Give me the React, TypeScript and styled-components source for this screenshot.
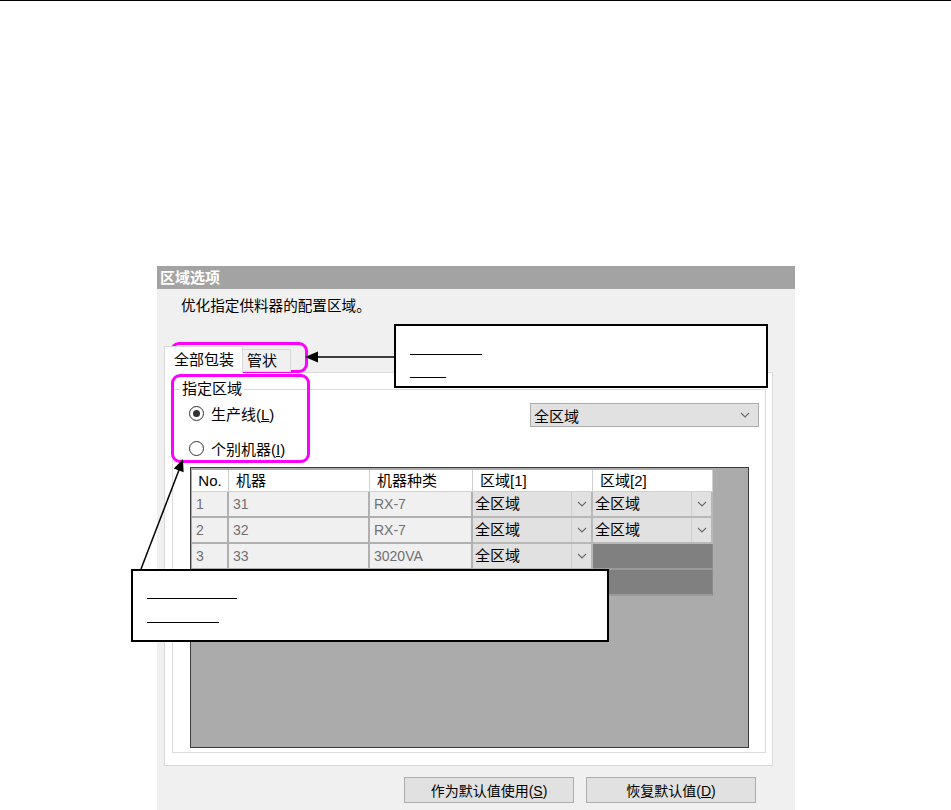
import React from "react";
import styled, { createGlobalStyle } from "styled-components";

const GlobalStyle = createGlobalStyle`
  html, body {
    margin: 0;
    padding: 0;
    background: #fff;
  }
  body {
    font-family: "Liberation Sans", "Noto Sans CJK SC", sans-serif;
    color: #000;
  }
`;

type Row = {
  no: string;
  machine: string;
  kind: string;
  area1: string | null;
  area2: string | null;
};

const rows: Row[] = [
  { no: "1", machine: "31", kind: "RX-7", area1: "全区域", area2: "全区域" },
  { no: "2", machine: "32", kind: "RX-7", area1: "全区域", area2: "全区域" },
  { no: "3", machine: "33", kind: "3020VA", area1: "全区域", area2: null },
  { no: "4", machine: "34", kind: "3020VA", area1: "全区域", area2: null },
];

const Chevron = () => (
  <svg width="10" height="6" viewBox="0 0 10 6">
    <path d="M1 1 L5 5 L9 1" fill="none" stroke="#6a6a6a" strokeWidth="1.1" />
  </svg>
);

const App = () => {
  return (
    <Page>
      <GlobalStyle />
      <TopRule />
      <Dialog>
        <TitleBar>区域选项</TitleBar>
        <Description>优化指定供料器的配置区域。</Description>
        <TabArea>
          <TabBar>
            <Tab $active>全部包装</Tab>
            <Tab>管状</Tab>
          </TabBar>
          <TabPage>
            <GroupBox>
              <Legend>指定区域</Legend>
              <GroupBody>
                <TopRow>
                  <RadioColumn>
                    <RadioItem>
                      <RadioCircle $checked />
                      <span>
                        生产线(<u>L</u>)
                      </span>
                    </RadioItem>
                    <RadioItem>
                      <RadioCircle />
                      <span>
                        个别机器(<u>I</u>)
                      </span>
                    </RadioItem>
                  </RadioColumn>
                  <Combo>
                    <span>全区域</span>
                    <Chevron />
                  </Combo>
                </TopRow>
                <GridFrame>
                  <Table>
                    <HeadCell $center>No.</HeadCell>
                    <HeadCell>机器</HeadCell>
                    <HeadCell>机器种类</HeadCell>
                    <HeadCell>区域[1]</HeadCell>
                    <HeadCell>区域[2]</HeadCell>
                    {rows.map((r) => (
                      <React.Fragment key={r.no}>
                        <DataCell>{r.no}</DataCell>
                        <DataCell>{r.machine}</DataCell>
                        <DataCell>{r.kind}</DataCell>
                        {[r.area1, r.area2].map((a, i) =>
                          a ? (
                            <ComboCell key={i}>
                              <ComboText>{a}</ComboText>
                              <ComboArrow>
                                <Chevron />
                              </ComboArrow>
                            </ComboCell>
                          ) : (
                            <EmptyCell key={i} />
                          )
                        )}
                      </React.Fragment>
                    ))}
                  </Table>
                </GridFrame>
              </GroupBody>
            </GroupBox>
          </TabPage>
        </TabArea>
        <ButtonBar>
          <Button>
            作为默认值使用(<u>S</u>)
          </Button>
          <Button>
            恢复默认值(<u>D</u>)
          </Button>
        </ButtonBar>
      </Dialog>

      <Highlight $left={170} $top={342} $width={138} $height={31} />
      <Highlight $left={171} $top={374} $width={139} $height={89} />

      <Callout $left={394} $top={324} $width={374} $height={64} $padTop={28} $gap={22}>
        <BlankLine $width={72} />
        <BlankLine $width={36} />
      </Callout>
      <Callout $left={131} $top={569} $width={478} $height={73} $padTop={27} $gap={23}>
        <BlankLine $width={90} />
        <BlankLine $width={72} />
      </Callout>

      <ArrowLayer width="951" height="810" viewBox="0 0 951 810">
        <line x1="394" y1="357" x2="316" y2="357" stroke="#000" strokeWidth="1.5" />
        <polygon points="305,357 318,351.5 318,362.5" fill="#000" />
        <line x1="141" y1="569" x2="179" y2="470" stroke="#000" strokeWidth="1.5" />
        <polygon points="183,459 183.6,472.2 173.8,468.4" fill="#000" />
      </ArrowLayer>
    </Page>
  );
};

const Page = styled.div`
  position: relative;
  width: 951px;
  height: 810px;
  overflow: hidden;
  background: #fff;
`;

const TopRule = styled.div`
  height: 1px;
  background: #000;
`;

const Dialog = styled.div`
  margin: 265px 0 0 157px;
  width: 638px;
  height: 544px;
  background: #f0f0f0;
  display: flex;
  flex-direction: column;
`;

const TitleBar = styled.div`
  height: 23px;
  line-height: 23px;
  background: #a3a3a3;
  color: #fff;
  font-size: 15px;
  font-weight: bold;
  padding-left: 3px;
`;

const Description = styled.div`
  margin: 7px 0 0 24px;
  font-size: 14.6px;
  line-height: 20px;
`;

const TabArea = styled.div`
  margin: 30px 0 0 7px;
  width: 609px;
  display: flex;
  flex-direction: column;
`;

const TabBar = styled.div`
  display: flex;
  align-items: flex-end;
  height: 26px;
  position: relative;
  z-index: 1;
`;

const Tab = styled.div<{ $active?: boolean }>`
  box-sizing: border-box;
  height: ${(p) => (p.$active ? 27 : 23)}px;
  margin-bottom: ${(p) => (p.$active ? -1 : 0)}px;
  width: ${(p) => (p.$active ? 79 : 48)}px;
  padding-left: ${(p) => (p.$active ? 9 : 4)}px;
  border: 1px solid #d9d9d9;
  border-bottom: ${(p) => (p.$active ? "none" : "1px solid #d9d9d9")};
  border-left: ${(p) => (p.$active ? "1px solid #d9d9d9" : "none")};
  background: ${(p) => (p.$active ? "#fff" : "#f0f0f0")};
  font-size: 15px;
  line-height: ${(p) => (p.$active ? 25 : 22)}px;
  white-space: nowrap;
`;

const TabPage = styled.div`
  box-sizing: border-box;
  height: 394px;
  border: 1px solid #d9d9d9;
  background: #fff;
  padding: 8px 6px 12px 7px;
  display: flex;
`;

const GroupBox = styled.fieldset`
  flex: 1;
  margin: 0;
  padding: 0;
  min-width: 0;
  border: 1px solid #dcdcdc;
  display: flex;
  flex-direction: column;
`;

const Legend = styled.legend`
  margin-left: 7px;
  padding: 0 2px;
  font-size: 15px;
  line-height: 16px;
`;

const GroupBody = styled.div`
  flex: 1;
  display: flex;
  flex-direction: column;
`;

const TopRow = styled.div`
  display: flex;
  justify-content: space-between;
  align-items: flex-start;
  padding: 4px 6px 0 16px;
`;

const RadioColumn = styled.div`
  display: flex;
  flex-direction: column;
  gap: 11px;
`;

const RadioItem = styled.label`
  height: 24px;
  display: flex;
  align-items: center;
  gap: 7px;
  font-size: 15px;
  u {
    text-decoration-thickness: 1px;
  }
`;

const RadioCircle = styled.span<{ $checked?: boolean }>`
  box-sizing: border-box;
  width: 15px;
  height: 15px;
  border: 1px solid #333;
  border-radius: 50%;
  background: #fff;
  display: flex;
  align-items: center;
  justify-content: center;
  &::after {
    content: "";
    width: 7px;
    height: 7px;
    border-radius: 50%;
    background: ${(p) => (p.$checked ? "#333" : "transparent")};
  }
`;

const Combo = styled.div`
  box-sizing: border-box;
  margin-top: 2px;
  width: 229px;
  height: 24px;
  border: 1px solid #adadad;
  background: #e1e1e1;
  display: flex;
  align-items: center;
  justify-content: space-between;
  padding: 0 8px 0 3px;
  font-size: 15px;
`;

const GridFrame = styled.div`
  flex: 1;
  margin: 7px 16px 4px 17px;
  border: 1px solid #3c3c3c;
  background: #ababab;
  padding: 2px 0 0 1px;
`;

const Table = styled.div`
  display: grid;
  grid-template-columns: 37px 141px 103px 120px 120px;
  grid-template-rows: 22px repeat(4, 26px);
  width: 521px;
`;

const HeadCell = styled.div<{ $center?: boolean }>`
  box-sizing: border-box;
  background: #fff;
  border-right: 1px solid #d0d0d0;
  border-bottom: 1px solid #d0d0d0;
  padding-left: ${(p) => (p.$center ? 0 : 7)}px;
  text-align: ${(p) => (p.$center ? "center" : "left")};
  font-size: 15px;
  line-height: 21px;
  white-space: nowrap;
`;

const DataCell = styled.div`
  box-sizing: border-box;
  background: #f0f0f0;
  border-right: 2px solid #b0b0b0;
  border-bottom: 2px solid #b0b0b0;
  padding-left: 4px;
  color: #707070;
  font-size: 14px;
  line-height: 24px;
  white-space: nowrap;
`;

const ComboCell = styled.div`
  box-sizing: border-box;
  background: #e1e1e1;
  border-right: 2px solid #b8b8b8;
  border-bottom: 2px solid #b8b8b8;
  display: flex;
`;

const ComboText = styled.div`
  flex: 1;
  padding-left: 2px;
  font-size: 15px;
  line-height: 24px;
  white-space: nowrap;
`;

const ComboArrow = styled.div`
  width: 19px;
  border-left: 1px solid #cfcfcf;
  display: flex;
  align-items: center;
  justify-content: center;
`;

const EmptyCell = styled.div`
  background: #808080;
  border-bottom: 2px solid #9a9a9a;
  border-right: 1px solid #8a8a8a;
`;

const ButtonBar = styled.div`
  margin-top: 11px;
  display: flex;
  justify-content: flex-end;
  gap: 12px;
  padding-right: 39px;
`;

const Button = styled.button`
  box-sizing: border-box;
  width: 170px;
  height: 26px;
  background: #e1e1e1;
  border: 1px solid #adadad;
  font-family: "Liberation Sans", "Noto Sans CJK SC", sans-serif;
  font-size: 14px;
  color: #000;
  padding: 0;
`;

const Highlight = styled.div<{ $left: number; $top: number; $width: number; $height: number }>`
  position: absolute;
  left: ${(p) => p.$left}px;
  top: ${(p) => p.$top}px;
  width: ${(p) => p.$width}px;
  height: ${(p) => p.$height}px;
  box-sizing: border-box;
  border: 3px solid #ff00ff;
  border-radius: 9px;
`;

const Callout = styled.div<{
  $left: number;
  $top: number;
  $width: number;
  $height: number;
  $padTop: number;
  $gap: number;
}>`
  position: absolute;
  left: ${(p) => p.$left}px;
  top: ${(p) => p.$top}px;
  width: ${(p) => p.$width}px;
  height: ${(p) => p.$height}px;
  box-sizing: border-box;
  border: 2px solid #000;
  background: #fff;
  display: flex;
  flex-direction: column;
  align-items: flex-start;
  gap: ${(p) => p.$gap}px;
  padding: ${(p) => p.$padTop}px 0 0 14px;
`;

const BlankLine = styled.div<{ $width: number }>`
  width: ${(p) => p.$width}px;
  height: 1px;
  background: #000;
`;

const ArrowLayer = styled.svg`
  position: absolute;
  left: 0;
  top: 0;
  pointer-events: none;
`;

export default App;
